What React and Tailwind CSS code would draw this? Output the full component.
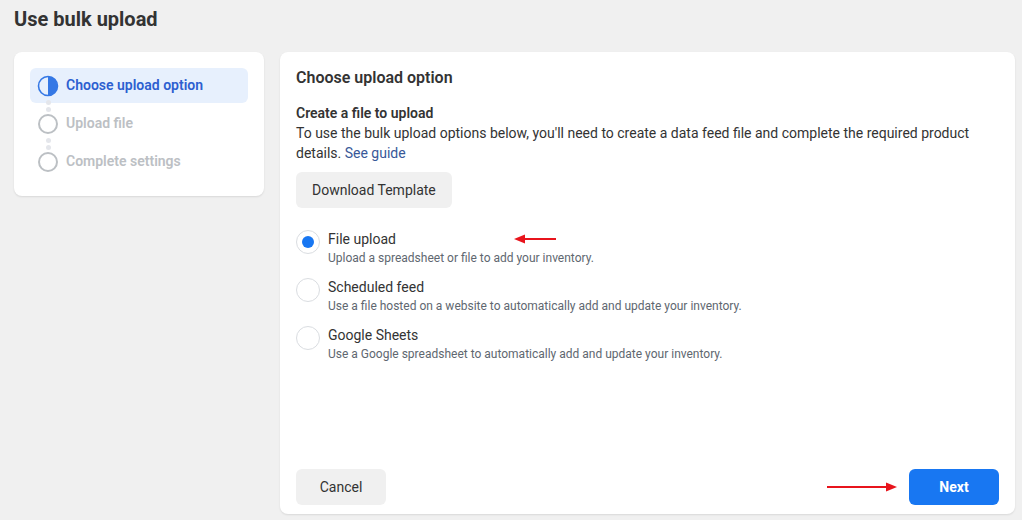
import React from 'react';

const steps = [
  { label: 'Choose upload option', active: true },
  { label: 'Upload file' },
  { label: 'Complete settings' },
];

const options = [
  { title: 'File upload', desc: 'Upload a spreadsheet or file to add your inventory.', checked: true },
  { title: 'Scheduled feed', desc: 'Use a file hosted on a website to automatically add and update your inventory.' },
  { title: 'Google Sheets', desc: 'Use a Google spreadsheet to automatically add and update your inventory.' },
];

const StepIcon = ({ active }) =>
  active ? (
    <svg width="22" height="22" viewBox="0 0 22 22">
      <circle cx="11" cy="11" r="9.5" fill="none" stroke="#3578e5" strokeWidth="1.6" />
      <path d="M11 1.5 A9.5 9.5 0 0 1 11 20.5 Z" fill="#3578e5" />
    </svg>
  ) : (
    <svg width="22" height="22" viewBox="0 0 22 22">
      <circle cx="11" cy="11" r="9" fill="none" stroke="#bcc0c4" strokeWidth="2" />
    </svg>
  );

const Dots = () => (
  <div className="flex h-[3px] flex-col items-center w-[22px] relative">
    <span className="absolute top-[-3px] w-[5px] h-[5px] rounded-full bg-[#e4e6eb]" />
    <span className="absolute top-[4px] w-[5px] h-[5px] rounded-full bg-[#e4e6eb]" />
  </div>
);

const Arrow = ({ dir }) => (
  <svg width={dir === 'left' ? 42 : 70} height="10" viewBox={dir === 'left' ? '0 0 42 10' : '0 0 70 10'}>
    {dir === 'left' ? (
      <>
        <line x1="8" y1="5" x2="42" y2="5" stroke="#e8141c" strokeWidth="2" />
        <polygon points="0,5 11,0.5 11,9.5" fill="#e8141c" />
      </>
    ) : (
      <>
        <line x1="0" y1="5" x2="60" y2="5" stroke="#e8141c" strokeWidth="2" />
        <polygon points="70,5 59,0.5 59,9.5" fill="#e8141c" />
      </>
    )}
  </svg>
);

export default function App() {
  return (
    <div className="w-[1022px] h-[520px] bg-[#f0f0f0] overflow-hidden font-['Roboto',sans-serif] text-[#1c1e21]">
      <h1 className="px-[14px] pt-[4px] h-[52px] text-[20px] font-bold text-[#333]">Use bulk upload</h1>
      <div className="flex gap-4 px-[14px] items-start">
        <div className="w-[250px] bg-white rounded-lg shadow-[0_1px_2px_rgba(0,0,0,0.1)] px-4 pt-4 pb-[17px]">
          {steps.map((s, i) => (
            <React.Fragment key={s.label}>
              {i > 0 && <div className="pl-[7px]"><Dots /></div>}
              <div
                className={`flex items-center gap-[7px] h-[35px] px-[7px] rounded-md text-[14px] font-semibold ${
                  s.active ? 'bg-[#e7f0fd] text-[#2d5fd0]' : 'text-[#bcc0c4]'
                }`}
              >
                <StepIcon active={s.active} />
                <span>{s.label}</span>
              </div>
            </React.Fragment>
          ))}
        </div>
        <div className="flex-1 h-[462px] mr-[-7px] bg-white rounded-lg shadow-[0_1px_2px_rgba(0,0,0,0.1)] px-4 pt-[16px] pb-[9px] flex flex-col">
          <h2 className="text-[16px] font-semibold text-[#333] leading-5">Choose upload option</h2>
          <div className="mt-[15px] text-[14px] leading-5 text-[#333]">
            <div className="font-semibold">Create a file to upload</div>
            <p>
              To use the bulk upload options below, you'll need to create a data feed file and complete the required product
              details. <a className="text-[#385898]">See guide</a>
            </p>
          </div>
          <button className="mt-[9px] self-start h-[36px] px-4 rounded-md bg-[#f0f0f0] text-[14px] text-[#333]">
            Download Template
          </button>
          <div className="mt-[22px] flex flex-col gap-[12px]">
            {options.map((o) => (
              <div key={o.title} className="flex items-start gap-[8px]">
                <div className="w-[24px] h-[24px] rounded-full border border-[#dadde1] flex items-center justify-center shrink-0">
                  {o.checked && <div className="w-[12px] h-[12px] rounded-full bg-[#1877f2]" />}
                </div>
                <div className="flex-1">
                  <div className="flex items-center gap-[118px] text-[14px] leading-[20px] text-[#333] mt-[-1px]">
                    <span>{o.title}</span>
                    {o.checked && <Arrow dir="left" />}
                  </div>
                  <div className="mt-[1px] text-[12px] leading-4 text-[#606770]">{o.desc}</div>
                </div>
              </div>
            ))}
          </div>
          <div className="mt-auto flex items-center justify-between">
            <button className="h-[36px] w-[90px] rounded-md bg-[#f0f0f0] text-[14px] text-[#333]">Cancel</button>
            <div className="flex items-center gap-[12px]">
              <Arrow dir="right" />
              <button className="h-[36px] w-[90px] rounded-md bg-[#1877f2] text-[14px] font-bold text-white">Next</button>
            </div>
          </div>
        </div>
      </div>
    </div>
  );
}
